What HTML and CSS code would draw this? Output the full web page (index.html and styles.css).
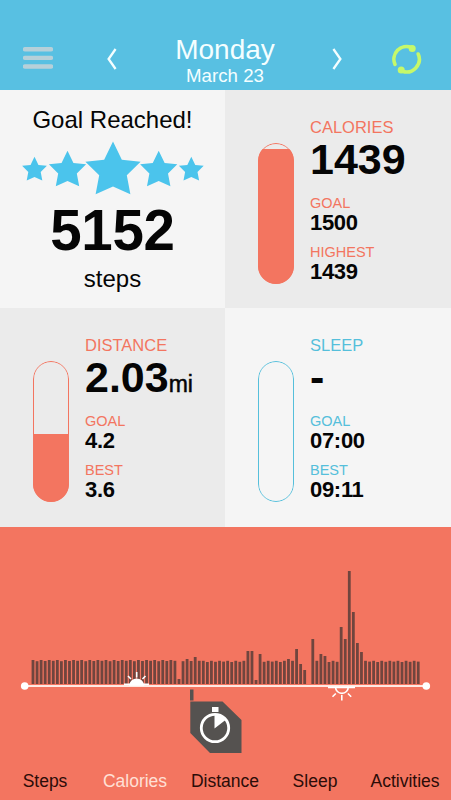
FILE: index.html
```html
<!DOCTYPE html>
<html lang="en">
<head>
  <meta charset="UTF-8">
  <meta name="viewport" content="width=device-width, initial-scale=1.0">
  <title>Activity</title>
  <link rel="stylesheet" href="styles.css">
</head>
<body>
  <header class="topbar">
    <svg class="menu" viewBox="0 0 30 22"><path d="M2 2.3H28M2 10.9H28M2 19.5H28"/></svg>
    <svg class="arrow prev" viewBox="0 0 10 22"><path d="M8.6 1L1.6 11L8.6 21"/></svg>
    <div class="date">
      <h1>Monday</h1>
      <p>March 23</p>
    </div>
    <svg class="arrow next" viewBox="0 0 10 22"><path d="M1.4 1L8.4 11L1.4 21"/></svg>
    <svg class="sync" viewBox="0 0 30 30">
      <path d="M3 20.4A12.7 12.7 0 0 1 19.5 3.5M26.2 10A12.7 12.7 0 0 1 10 27"/>
      <circle cx="20.2" cy="4.6" r="3.5"/>
      <circle cx="9.2" cy="26" r="3.5"/>
    </svg>
  </header>

  <main class="grid">
    <section class="card steps">
      <p class="reached">Goal Reached!</p>
      <svg class="stars" viewBox="0 0 182 54">
        <defs><path id="star" d="M0 -10L3.2 -3.4L10 -2.7L5 2.2L6.3 9.1L0 6.3L-6.3 9.1L-5 2.2L-10 -2.7L-3.2 -3.4Z"/></defs>
        <use href="#star" transform="translate(12.5 28.2) scale(1.24)"/>
        <use href="#star" transform="translate(45.5 28.3) scale(1.86)"/>
        <use href="#star" transform="translate(91 28.2) scale(2.76)"/>
        <use href="#star" transform="translate(136.7 28.3) scale(1.86)"/>
        <use href="#star" transform="translate(169.3 28.2) scale(1.24)"/>
      </svg>
      <p class="count">5152</p>
      <p class="unit">steps</p>
    </section>

    <section class="card stat gray">
      <div class="tube"><div class="fill" style="height: 95.7%"></div></div>
      <div class="info">
        <h2>CALORIES</h2>
        <p class="big">1439</p>
        <h3>GOAL</h3>
        <p class="small">1500</p>
        <h3>HIGHEST</h3>
        <p class="small">1439</p>
      </div>
    </section>

    <section class="card stat gray">
      <div class="tube"><div class="fill" style="height: 48.3%"></div></div>
      <div class="info">
        <h2>DISTANCE</h2>
        <p class="big">2.03<span>mi</span></p>
        <h3>GOAL</h3>
        <p class="small">4.2</p>
        <h3>BEST</h3>
        <p class="small">3.6</p>
      </div>
    </section>

    <section class="card stat blue">
      <div class="tube"></div>
      <div class="info">
        <h2>SLEEP</h2>
        <p class="big">-</p>
        <h3>GOAL</h3>
        <p class="small">07:00</p>
        <h3>BEST</h3>
        <p class="small">09:11</p>
      </div>
    </section>
  </main>

  <section class="timeline">
    <svg class="chart" viewBox="0 0 451 230">
      <g id="bars"></g>
      <path class="axis" d="M25 159H426"/>
      <circle class="dot" cx="24.7" cy="159" r="3.8"/>
      <circle class="dot" cx="426.3" cy="159" r="3.8"/>
      <!-- sunrise -->
      <g class="sun">
        <path class="solid" d="M130 158A6.8 6.8 0 0 1 143.4 158Z"/>
        <path d="M124 157.3H149M136.7 145V150.5M128 149L131 152M145.5 149L142.5 152"/>
      </g>
      <!-- sunset -->
      <g class="sun">
        <path d="M335.5 160A6.4 6.4 0 0 0 348.3 160M328 160.4H355M341.8 168V173.5M335.8 166.5L332.5 169.8M347.9 166.5L351.2 169.8"/>
      </g>
      <!-- stopwatch marker -->
      <path class="marker" d="M190 162.5H193.5V173.5H190ZM190.3 174.5H222.5L241.5 193V226H210L190.3 206Z"/>
      <circle class="ring" cx="215" cy="201" r="13.7"/>
      <path class="hand" d="M212 180H218.5V185H212ZM214.5 188A13 13 0 0 1 225.5 193L214.5 201.5Z"/>
    </svg>
    <nav class="tabs">
      <a>Steps</a>
      <a class="active">Calories</a>
      <a>Distance</a>
      <a>Sleep</a>
      <a>Activities</a>
    </nav>
  </section>

  <script src="script.js"></script>
</body>
</html>
```
FILE: styles.css
```css
* {
  box-sizing: border-box;
}

body {
  margin: 0;
  width: 451px;
  height: 800px;
  overflow: hidden;
  display: flex;
  flex-direction: column;
  font-family: "Liberation Sans", Arial, sans-serif;
  color: #050505;
}

h1, h2, h3, p {
  margin: 0;
  font-weight: normal;
  white-space: nowrap;
}

svg {
  display: block;
  flex: none;
}

.topbar {
  height: 90px;
  padding: 34px 29px 0 23px;
  display: flex;
  background: #58c0e2;
  color: #f4feff;
}

.menu {
  width: 30px;
  height: 22px;
  margin-top: 13px;
  stroke: #b6d0d9;
  stroke-width: 4.4;
  stroke-linecap: round;
}

.arrow {
  width: 10px;
  height: 22px;
  margin-top: 14px;
  fill: none;
  stroke: #f4feff;
  stroke-width: 2.3;
}

.prev {
  margin-left: 54px;
}

.date {
  width: 215px;
  padding-left: 1px;
  text-align: center;
}

.date h1 {
  font-size: 28px;
  line-height: 32px;
}

.date p {
  font-size: 18.7px;
  line-height: 20px;
}

.sync {
  width: 30px;
  height: 30px;
  margin: 10px 0 0 auto;
  fill: #c6f86a;
}

.sync path {
  fill: none;
  stroke: #c6f86a;
  stroke-width: 3.6;
  stroke-linecap: round;
}

.grid {
  height: 437px;
  display: grid;
  grid-template-columns: 225px 226px;
  grid-template-rows: 218px 219px;
}

.card {
  background: #f5f5f5;
}

.gray {
  background: #ebebeb;
}

.steps {
  display: flex;
  flex-direction: column;
  align-items: center;
}

.reached {
  margin-top: 16px;
  font-size: 24px;
  line-height: 28px;
}

.stars {
  width: 182px;
  height: 54px;
  margin-top: 7px;
  fill: #4bc4ec;
}

.count {
  margin-top: 8px;
  font-size: 56.5px;
  font-weight: bold;
  line-height: 56px;
  letter-spacing: -0.3px;
}

.unit {
  margin-top: 6px;
  font-size: 24px;
  line-height: 28px;
}

.stat {
  padding: 28px 0 0 33px;
  display: flex;
  gap: 16px;
  color: #f37560;
}

.blue {
  color: #55bfdb;
}

.tube {
  position: relative;
  width: 36px;
  height: 141px;
  margin-top: 25px;
  border-radius: 18px;
  display: flex;
  align-items: flex-end;
  overflow: hidden;
}

/* outline goes over the fill so the edges stay solid */
.tube::after {
  content: "";
  position: absolute;
  inset: 0;
  border: 1px solid currentColor;
  border-radius: 18px;
}

.fill {
  width: 100%;
  background: #f37560;
}

.info h2 {
  font-size: 16.5px;
  line-height: 19px;
}

.info h3 {
  font-size: 14.5px;
  line-height: 18px;
}

.big, .small {
  color: #050505;
  font-weight: bold;
}

.big {
  height: 57px;
  font-size: 43px;
  line-height: 44px;
}

.big span {
  font-size: 23px;
  font-weight: normal;
  -webkit-text-stroke: 0.5px #050505;
}

.small {
  height: 31px;
  font-size: 22px;
  line-height: 22px;
  letter-spacing: -0.3px;
}

.timeline {
  height: 273px;
  background: #f37560;
}

.chart {
  width: 451px;
  height: 230px;
}

#bars {
  fill: #70453e;
}

.axis {
  stroke: #ffe9e3;
  stroke-width: 2.2;
}

.dot, .solid {
  fill: #fff;
}

.sun path {
  stroke: #fff;
  stroke-width: 1.6;
  fill: none;
}

.sun .solid {
  fill: #fff;
}

.marker {
  fill: #555250;
}

.ring {
  fill: none;
  stroke: #fff;
  stroke-width: 2.8;
}

.hand {
  fill: #fff;
}

.tabs {
  display: grid;
  grid-template-columns: repeat(5, 90px);
  text-align: center;
  font-size: 17.5px;
  line-height: 20px;
  padding-top: 14px;
  color: #2b0c08;
}

.active {
  color: #ffe0d6;
}
```
FILE: script.js
```javascript
// one bar per quarter hour, 22-23 is the resting level
const special = {
  36: 5, 38: 25, 40: 27, 53: 33, 54: 33, 55: 4, 56: 30, 63: 25,
  65: 35, 66: 20, 67: 14, 68: 0, 69: 45, 71: 30, 72: 28,
  76: 57, 77: 45, 78: 113, 79: 72, 80: 41, 81: 32
};
const resting = [24, 22.8, 24, 23, 24, 23.2];
const bars = document.getElementById('bars');

for (let i = 0; i < 96; i++) {
  const h = i in special ? special[i] : resting[i % resting.length] - (i > 41 ? 0.8 : 0);
  const bar = document.createElementNS('http://www.w3.org/2000/svg', 'rect');
  bar.setAttribute('x', 31.6 + i * 4.055);
  bar.setAttribute('y', 157 - h);
  bar.setAttribute('width', 2.8);
  bar.setAttribute('height', h);
  bars.appendChild(bar);
}
```
